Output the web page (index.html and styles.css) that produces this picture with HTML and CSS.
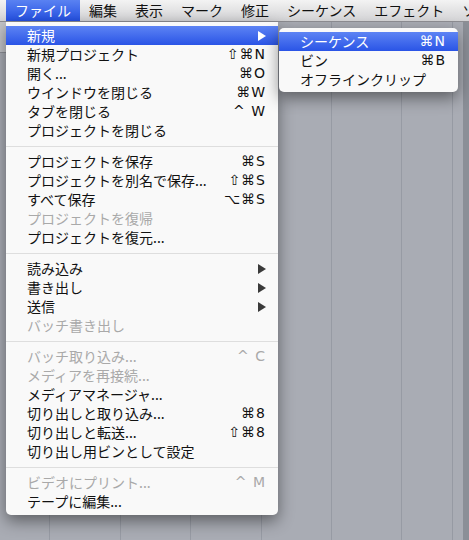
FILE: index.html
```html
<!DOCTYPE html>
<html lang="ja">
<head>
    <meta charset="UTF-8">
    <title>ファイル メニュー</title>
    <link rel="stylesheet" href="styles.css">
</head>
<body>
    <div class="screen">
        <div class="menubar">
            <span class="bar-item active">ファイル</span>
            <span class="bar-item">編集</span>
            <span class="bar-item">表示</span>
            <span class="bar-item">マーク</span>
            <span class="bar-item">修正</span>
            <span class="bar-item">シーケンス</span>
            <span class="bar-item">エフェクト</span>
            <span class="bar-item">ソ</span>
        </div>
        <div class="desk">
            <div class="left-strip"></div>
        </div>

        <div class="menu main-menu">
            <div class="row selected"><span>新規</span><span class="arrow"></span></div>
            <div class="row"><span>新規プロジェクト</span><span class="key">⇧⌘N</span></div>
            <div class="row"><span>開く...</span><span class="key">⌘O</span></div>
            <div class="row"><span>ウインドウを閉じる</span><span class="key">⌘W</span></div>
            <div class="row"><span>タブを閉じる</span><span class="key">^ W</span></div>
            <div class="row"><span>プロジェクトを閉じる</span></div>
            <div class="sep"></div>
            <div class="row"><span>プロジェクトを保存</span><span class="key">⌘S</span></div>
            <div class="row"><span>プロジェクトを別名で保存...</span><span class="key">⇧⌘S</span></div>
            <div class="row"><span>すべて保存</span><span class="key">⌥⌘S</span></div>
            <div class="row disabled"><span>プロジェクトを復帰</span></div>
            <div class="row"><span>プロジェクトを復元...</span></div>
            <div class="sep"></div>
            <div class="row"><span>読み込み</span><span class="arrow"></span></div>
            <div class="row"><span>書き出し</span><span class="arrow"></span></div>
            <div class="row"><span>送信</span><span class="arrow"></span></div>
            <div class="row disabled"><span>バッチ書き出し</span></div>
            <div class="sep"></div>
            <div class="row disabled"><span>バッチ取り込み...</span><span class="key">^ C</span></div>
            <div class="row disabled"><span>メディアを再接続...</span></div>
            <div class="row"><span>メディアマネージャ...</span></div>
            <div class="row"><span>切り出しと取り込み...</span><span class="key">⌘8</span></div>
            <div class="row"><span>切り出しと転送...</span><span class="key">⇧⌘8</span></div>
            <div class="row"><span>切り出し用ビンとして設定</span></div>
            <div class="sep"></div>
            <div class="row disabled"><span>ビデオにプリント...</span><span class="key">^ M</span></div>
            <div class="row"><span>テープに編集...</span></div>
        </div>

        <div class="menu sub-menu">
            <div class="row selected"><span>シーケンス</span><span class="key">⌘N</span></div>
            <div class="row"><span>ビン</span><span class="key">⌘B</span></div>
            <div class="row"><span>オフラインクリップ</span></div>
        </div>
    </div>
</body>
</html>
```

FILE: styles.css
```css
body {
    margin: 0;
    background: #a9acb4;
    font-family: "Noto Sans CJK JP", "DejaVu Sans", sans-serif;
}
.screen {
    position: relative;
    width: 469px;
    height: 540px;
    overflow: hidden;
}
.menubar {
    display: flex;
    height: 21px;
    padding-left: 6px;
    background: linear-gradient(#f3f3f3, #d3d3d5);
    border-bottom: 1px solid #8d8d92;
    font-size: 14px;
    line-height: 21px;
    color: #111;
    white-space: nowrap;
    overflow: hidden;
}
.bar-item {
    padding: 0 9px;
}
.bar-item.active {
    background: linear-gradient(#5a82f2, #2450e2);
    color: #fff;
}
.desk {
    height: 518px;
    background:
        linear-gradient(to right, transparent 452px, #969aa3 452px, #969aa3 453px, transparent 453px, transparent 463px, #8b8f97 463px),
        repeating-linear-gradient(to right, #a9acb4 0, #a9acb4 49.5px, #979ba4 49.5px, #979ba4 50.5px, #a9acb4 50.5px, #a9acb4 70.4px);
}
.left-strip {
    width: 6px;
    height: 30px;
    background: #c3c4c8;
    border-bottom: 1px solid #8e9097;
}
.menu {
    position: absolute;
    background: #f9f9f9;
    box-shadow: 0 6px 16px rgba(0, 0, 0, 0.45);
    font-size: 14px;
    color: #111;
}
.main-menu {
    left: 6px;
    top: 22px;
    width: 272px;
    padding: 4px 0;
    border-radius: 0 0 5px 5px;
}
.sub-menu {
    left: 279px;
    top: 28px;
    width: 179px;
    padding: 4px 0 3px;
    border-radius: 5px;
}
.row {
    display: flex;
    justify-content: space-between;
    align-items: center;
    height: 19px;
    padding: 0 13px 0 21px;
    line-height: 19px;
    white-space: nowrap;
}
.row.selected {
    background: linear-gradient(#5d84f4, #2a54e6);
    color: #fff;
}
.row.disabled {
    color: #a9a9a9;
}
.key {
    font-family: "DejaVu Sans", sans-serif;
    font-size: 14px;
    letter-spacing: 1px;
    margin-right: -1px;
}
.arrow {
    width: 0;
    height: 0;
    margin-right: -1px;
    border-top: 5px solid transparent;
    border-bottom: 5px solid transparent;
    border-left: 8px solid #3a3a3a;
}
.row.selected .arrow {
    border-left-color: #fff;
}
.sep {
    height: 1px;
    margin: 6px 0 5px;
    background: #dedede;
}
```
